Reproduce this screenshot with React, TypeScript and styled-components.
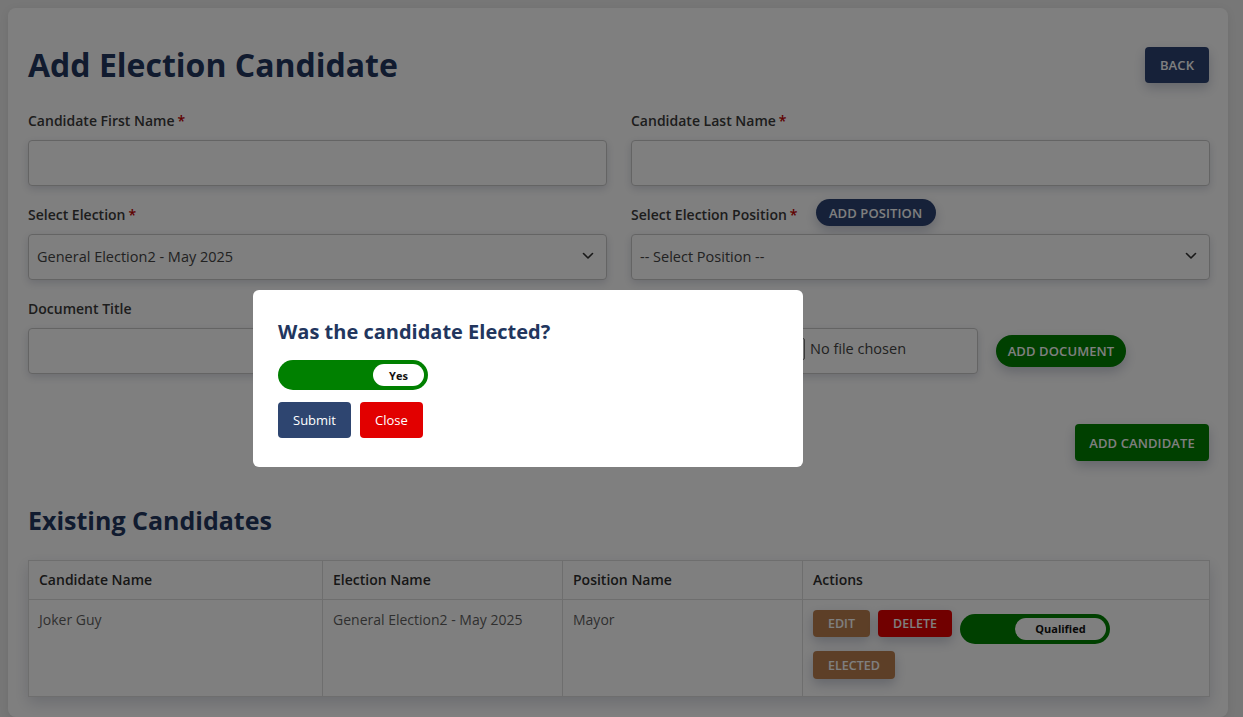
import React from "react";
import styled, { createGlobalStyle } from "styled-components";

const GlobalStyle = createGlobalStyle`
  * { box-sizing: border-box; }
  html, body { margin: 0; padding: 0; }
  body {
    background: #eeeeee;
    font-family: "Open Sans", "Noto Sans", Arial, sans-serif;
    color: #333;
  }
`;

const NAVY = "#2d4372";
const GREEN = "#008000";
const RED = "#e20000";
const BROWN = "#bb7f4f";

const Page = styled.div`
  padding: 8px 15px 8px 8px;
`;

const Card = styled.div`
  width: 1220px;
  background: #fff;
  border-radius: 8px;
  padding: 20px 18px 20px 20px;
  box-shadow: 0 2px 10px rgba(0, 0, 0, 0.08);
`;

const Header = styled.div`
  display: flex;
  align-items: center;
  justify-content: space-between;
  margin-top: 19px;
  height: 36px;
  padding-right: 1px;
`;

const Title = styled.h1`
  margin: 0;
  font-size: 32px;
  line-height: 40px;
  font-weight: 700;
  color: #22375f;
`;

const Button = styled.button<{ $bg: string; $pill?: boolean; $h: number; $w?: number }>`
  display: inline-flex;
  align-items: center;
  justify-content: center;
  height: ${(p) => p.$h}px;
  ${(p) => (p.$w ? `width: ${p.$w}px;` : "padding: 0 14px;")}
  background: ${(p) => p.$bg};
  color: #fff;
  border: none;
  border-radius: ${(p) => (p.$pill ? "999px" : "4px")};
  font-family: "Open Sans", sans-serif;
  font-size: 13px;
  font-weight: 600;
  text-transform: uppercase;
  letter-spacing: 0.1px;
  box-shadow: 0 5px 12px rgba(40, 50, 90, 0.25);
  cursor: pointer;
  flex-shrink: 0;
`;

const Form = styled.div`
  display: grid;
  grid-template-columns: 1fr 1fr;
  column-gap: 24px;
  row-gap: 19px;
  margin-top: 28px;
`;

const Field = styled.div`
  display: flex;
  flex-direction: column;
`;

const LabelRow = styled.div`
  display: flex;
  align-items: center;
  gap: 18px;
  height: 20px;
  margin-bottom: 9px;
`;

const Label = styled.label`
  font-size: 14px;
  font-weight: 600;
  color: #3a3a3a;
  line-height: 20px;
`;

const Req = styled.span`
  color: #c00000;
  margin-left: 3px;
`;

const PillSlot = styled.div`
  align-self: flex-end;
  margin-bottom: -1px;
`;

const Input = styled.div`
  height: 46px;
  border: 1px solid #c9c9c9;
  border-radius: 4px;
  background: #fff;
  box-shadow: 0 3px 8px rgba(40, 50, 90, 0.18);
`;

const Select = styled(Input)`
  display: flex;
  align-items: center;
  justify-content: space-between;
  padding: 0 12px 2px 8px;
  font-size: 14.5px;
  color: #444;
`;

const FileRow = styled.div`
  display: flex;
  align-items: center;
  gap: 18px;
`;

const FileBox = styled(Input)`
  width: 347px;
  display: flex;
  align-items: center;
  padding: 0 10px 0 10px;
  font-size: 14.5px;
  color: #444;
  align-self: flex-start;
`;

const FileButton = styled.span`
  display: inline-flex;
  align-items: center;
  justify-content: center;
  width: 163px;
  height: 22px;
  margin-top: -4px;
  border: 1px solid #767676;
  border-radius: 2px;
  background: #efefef;
  font-size: 13px;
  color: #000;
  margin-right: 5px;
`;

const FileText = styled.span`
  margin-top: -6px;
`;

const SubmitRow = styled.div`
  display: flex;
  justify-content: flex-end;
  margin-top: 50px;
  padding-right: 1px;
`;

const SubTitle = styled.h2`
  margin: 44px 0 0;
  font-size: 25px;
  line-height: 31px;
  font-weight: 700;
  color: #22375f;
`;

const Table = styled.table`
  width: 100%;
  margin-top: 24px;
  border-collapse: collapse;
  background: #fff;
  box-shadow: 0 6px 14px rgba(40, 50, 90, 0.18);
`;

const Th = styled.th<{ $w: number }>`
  width: ${(p) => p.$w}px;
  text-align: left;
  font-size: 14px;
  font-weight: 600;
  color: #2f2f2f;
  padding: 10px 10px;
  line-height: 18px;
  border: 1px solid #dddddd;
`;

const Td = styled.td`
  vertical-align: top;
  font-size: 14px;
  color: #5f5f5f;
  padding: 10px 10px;
  line-height: 20px;
  border: 1px solid #dddddd;
`;

const Actions = styled.div`
  display: flex;
  flex-wrap: wrap;
  align-items: flex-start;
  & > * {
    margin: 0 8px 7px 0;
  }
`;

const SmallBtn = styled.button<{ $bg: string; $w: number; $h?: number }>`
  height: ${(p) => p.$h ?? 27}px;
  width: ${(p) => p.$w}px;
  border: none;
  border-radius: 4px;
  background: ${(p) => p.$bg};
  color: #fff;
  font-family: "Open Sans", sans-serif;
  font-size: 12.5px;
  font-weight: 600;
  text-transform: uppercase;
  box-shadow: 0 5px 12px rgba(40, 50, 90, 0.25);
`;

const Toggle = styled.div<{ $offset?: number }>`
  position: relative;
  width: 150px;
  height: 30px;
  border-radius: 15px;
  background: ${GREEN};
  margin-top: ${(p) => p.$offset ?? 0}px !important;
  flex-shrink: 0;
`;

const Knob = styled.div<{ $w: number }>`
  position: absolute;
  top: 4px;
  right: 4px;
  width: ${(p) => p.$w}px;
  height: 22px;
  border-radius: 11px;
  background: #fff;
  display: flex;
  align-items: center;
  justify-content: center;
  font-size: 11px;
  font-weight: 700;
  color: #111;
`;

const Overlay = styled.div`
  position: fixed;
  inset: 0;
  background: rgba(0, 0, 0, 0.5);
`;

const Modal = styled.div`
  position: absolute;
  left: 253px;
  top: 290px;
  width: 550px;
  height: 177px;
  background: #fff;
  border-radius: 6px;
  padding: 30px 25px;
`;

const ModalTitle = styled.h3`
  margin: 0;
  font-size: 20px;
  line-height: 24px;
  font-weight: 700;
  color: #22365e;
`;

const ModalBody = styled.div`
  margin-top: 16px;
`;

const ModalButtons = styled.div`
  display: flex;
  gap: 9px;
  margin-top: 12px;
`;

const ModalBtn = styled.button<{ $bg: string }>`
  height: 36px;
  padding: 0 15px;
  border: none;
  border-radius: 4px;
  background: ${(p) => p.$bg};
  color: #fff;
  font-family: "Open Sans", sans-serif;
  font-size: 13px;
`;

const Chevron = () => (
  <svg width="12" height="8" viewBox="0 0 12 8">
    <polyline points="1.5,1.5 6,6 10.5,1.5" fill="none" stroke="#333" strokeWidth="1.6" strokeLinecap="round" strokeLinejoin="round" />
  </svg>
);

export default function App() {
  return (
    <>
      <GlobalStyle />
      <Page>
        <Card>
          <Header>
            <Title>Add Election Candidate</Title>
            <Button $bg={NAVY} $h={36} $w={64}>Back</Button>
          </Header>

          <Form>
            <Field>
              <LabelRow>
                <Label>Candidate First Name<Req>*</Req></Label>
              </LabelRow>
              <Input />
            </Field>
            <Field>
              <LabelRow>
                <Label>Candidate Last Name<Req>*</Req></Label>
              </LabelRow>
              <Input />
            </Field>

            <Field>
              <LabelRow>
                <Label>Select Election<Req>*</Req></Label>
              </LabelRow>
              <Select>
                <span>General Election2 - May 2025</span>
                <Chevron />
              </Select>
            </Field>
            <Field>
              <LabelRow>
                <Label>Select Election Position<Req>*</Req></Label>
                <PillSlot>
                  <Button $bg={NAVY} $pill $h={27} $w={120}>Add Position</Button>
                </PillSlot>
              </LabelRow>
              <Select>
                <span>-- Select Position --</span>
                <Chevron />
              </Select>
            </Field>

            <Field>
              <LabelRow>
                <Label>Document Title</Label>
              </LabelRow>
              <Input />
            </Field>
            <Field>
              <LabelRow>
                <Label>Upload Document</Label>
              </LabelRow>
              <FileRow>
                <FileBox>
                  <FileButton>Choose File</FileButton>
                  <FileText>No file chosen</FileText>
                </FileBox>
                <Button $bg={GREEN} $pill $h={32} $w={130}>Add Document</Button>
              </FileRow>
            </Field>
          </Form>

          <SubmitRow>
            <Button $bg={GREEN} $h={37} $w={134}>Add Candidate</Button>
          </SubmitRow>

          <SubTitle>Existing Candidates</SubTitle>

          <Table>
            <thead>
              <tr>
                <Th $w={294}>Candidate Name</Th>
                <Th $w={240}>Election Name</Th>
                <Th $w={240}>Position Name</Th>
                <Th $w={407}>Actions</Th>
              </tr>
            </thead>
            <tbody>
              <tr>
                <Td>Joker Guy</Td>
                <Td>General Election2 - May 2025</Td>
                <Td>Mayor</Td>
                <Td>
                  <Actions>
                    <SmallBtn $bg={BROWN} $w={57}>Edit</SmallBtn>
                    <SmallBtn $bg={RED} $w={74}>Delete</SmallBtn>
                    <Toggle $offset={4}>
                      <Knob $w={91}>Qualified</Knob>
                    </Toggle>
                    <SmallBtn $bg={BROWN} $w={82} $h={28}>Elected</SmallBtn>
                  </Actions>
                </Td>
              </tr>
            </tbody>
          </Table>
        </Card>
      </Page>

      <Overlay>
        <Modal>
          <ModalTitle>Was the candidate Elected?</ModalTitle>
          <ModalBody>
            <Toggle>
              <Knob $w={51}>Yes</Knob>
            </Toggle>
          </ModalBody>
          <ModalButtons>
            <ModalBtn $bg="#2e4570">Submit</ModalBtn>
            <ModalBtn $bg={RED}>Close</ModalBtn>
          </ModalButtons>
        </Modal>
      </Overlay>
    </>
  );
}
